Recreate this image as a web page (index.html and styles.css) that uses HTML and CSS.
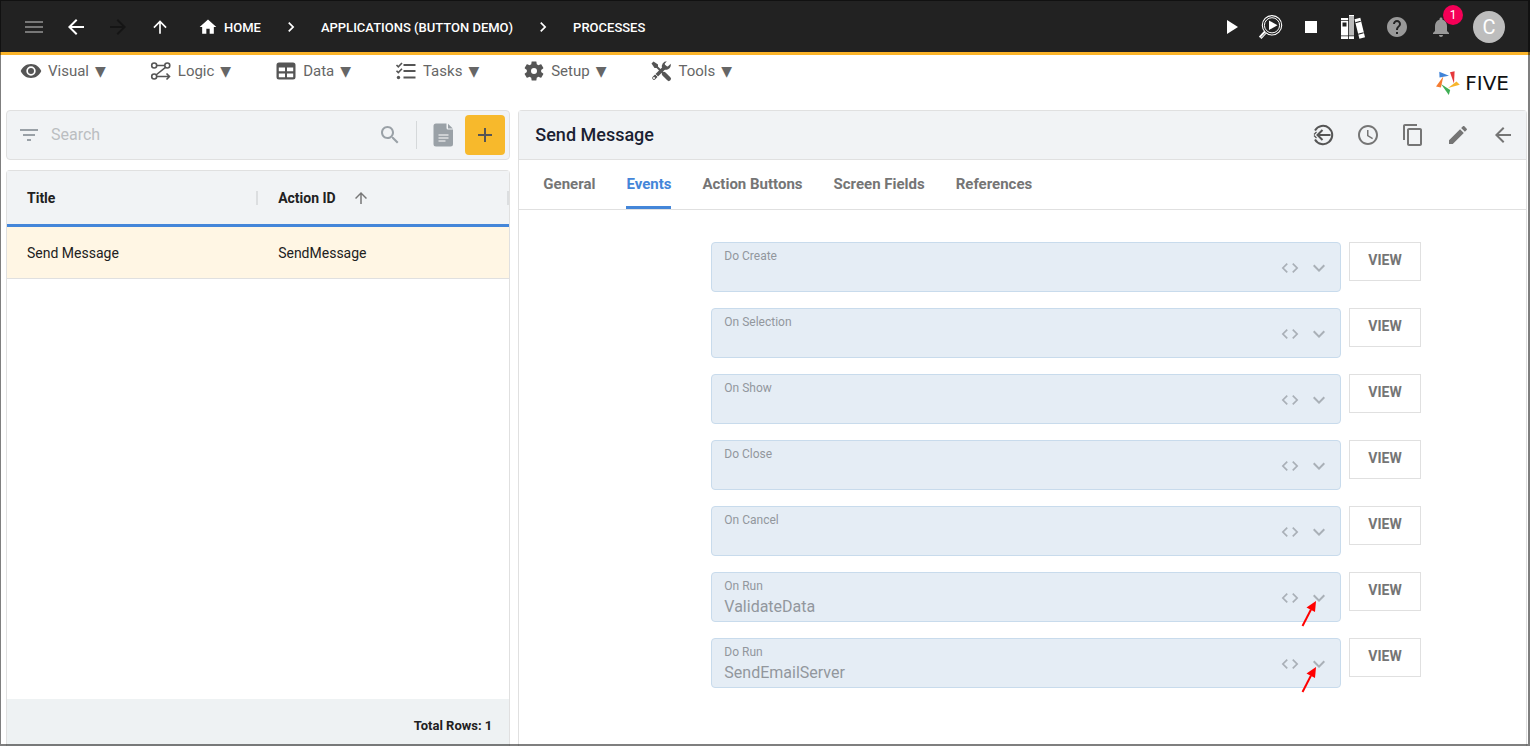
FILE: index.html
```
<!DOCTYPE html>
<html lang="en">

<head>
    <meta charset="UTF-8">
    <meta name="viewport" content="width=device-width, initial-scale=1.0">
    <title>Five - Processes</title>
    <link rel="stylesheet" href="styles.css">
</head>

<body>

    <!-- Shared icons -->
    <svg class="sprite" aria-hidden="true">
        <symbol id="arrow-left" viewBox="0 0 24 24"><path d="M20 11H7.83l5.59-5.59L12 4l-8 8 8 8 1.41-1.41L7.83 13H20v-2z"/></symbol>
        <symbol id="arrow-right" viewBox="0 0 24 24"><path d="M12 4l-1.41 1.41L16.17 11H4v2h12.17l-5.58 5.59L12 20l8-8z"/></symbol>
        <symbol id="arrow-up" viewBox="0 0 24 24"><path d="M4 12l1.41 1.41L11 7.83V20h2V7.83l5.58 5.59L20 12l-8-8-8 8z"/></symbol>
        <symbol id="chevron-right" viewBox="0 0 24 24"><path d="M10 6L8.59 7.41 13.17 12l-4.58 4.59L10 18l6-6z"/></symbol>
        <symbol id="chevron-down" viewBox="0 0 24 24"><path d="M16.59 8.59L12 13.17 7.41 8.59 6 10l6 6 6-6z"/></symbol>
        <symbol id="code" viewBox="0 0 24 24"><path d="M9.4 16.6L4.8 12l4.6-4.6L8 6l-6 6 6 6 1.4-1.4zm5.2 0l4.6-4.6-4.6-4.6L16 6l6 6-6 6-1.4-1.4z"/></symbol>
        <symbol id="pointer" viewBox="0 0 16 28"><path d="M1.500 26L10 9.500" fill="none" stroke="#f00" stroke-width="2"/><path d="M15 1L5.500 7.500l8.500 4.500z" fill="#f00"/></symbol>
    </svg>

    <header class="topbar">
        <div class="nav-buttons">
            <button class="icon-btn dim" aria-label="Menu"><svg class="icon" viewBox="0 0 24 24"><path d="M3 18h18v-2H3v2zm0-5h18v-2H3v2zm0-7v2h18V6H3z"/></svg></button>
            <button class="icon-btn" aria-label="Back"><svg class="icon"><use href="#arrow-left"/></svg></button>
            <button class="icon-btn off" aria-label="Forward"><svg class="icon"><use href="#arrow-right"/></svg></button>
            <button class="icon-btn" aria-label="Up"><svg class="icon icon-md"><use href="#arrow-up"/></svg></button>
        </div>
        <nav class="breadcrumb">
            <a href="#"><svg class="icon icon-md" viewBox="0 0 24 24"><path d="M10 20v-6h4v6h5v-8h3L12 3 2 12h3v8z"/></svg>HOME</a>
            <svg class="icon icon-md"><use href="#chevron-right"/></svg>
            <a href="#">APPLICATIONS (BUTTON DEMO)</a>
            <svg class="icon icon-md"><use href="#chevron-right"/></svg>
            <a href="#">PROCESSES</a>
        </nav>
        <div class="run-tools">
            <button class="icon-btn" aria-label="Run"><svg class="icon" viewBox="0 0 24 24"><path d="M8 5v14l11-7z"/></svg></button>
            <button class="icon-btn" aria-label="Inspect">
                <svg class="icon" viewBox="0 0 24 24">
                    <g fill="none" stroke="#fff">
                        <circle cx="13" cy="10.300" r="9.700" stroke-width="1.100"/>
                        <circle cx="13" cy="10.300" r="7.600" stroke-width="1"/>
                        <path d="M6.500 17L1.200 22.800" stroke-width="3.400"/>
                    </g>
                    <path d="M6.800 17.500L2 22.500" stroke="#222" stroke-width=".7"/>
                    <path d="M10 5.500v9.500l8.500-4.700z"/>
                </svg>
            </button>
            <button class="icon-btn" aria-label="Stop"><svg class="icon" viewBox="0 0 24 24"><path d="M6 6h12v12H6z"/></svg></button>
        </div>
        <div class="user-tools">
            <button class="icon-btn" aria-label="Library">
                <svg class="icon" viewBox="0 0 24 24">
                    <path d="M0 3h7.500v21H0zM8 0h5v24H8zM13.500 4.200l5.800-1.500L24 22.200l-5.600 1.600z"/>
                    <path d="M8 1h5v20H8z" fill="#bbb"/>
                    <path d="M1.500 7.500h4v4h-4zM0 5h7.500v.8H0zM0 20.500h13v.8H0zM7.300 3h.7v21h-.7zM14.200 7.200l5.400-1.500.3 1-5.400 1.500zM17 18.800l5.500-1.500.3 1-5.500 1.500z" fill="#222"/>
                    <path d="M13.200 8v16h3.800z" fill="#222"/>
                </svg>
            </button>
            <button class="icon-btn soft" aria-label="Help"><svg class="icon" viewBox="0 0 24 24"><path d="M12 2C6.480 2 2 6.480 2 12s4.480 10 10 10 10-4.480 10-10S17.520 2 12 2zm1 17h-2v-2h2v2zm2.070-7.750l-.9.920C13.450 12.900 13 13.500 13 15h-2v-.5c0-1.100.450-2.100 1.170-2.830l1.240-1.260c.370-.360.590-.860.590-1.410 0-1.100-.9-2-2-2s-2 .9-2 2H8c0-2.210 1.790-4 4-4s4 1.790 4 4c0 .880-.360 1.680-.930 2.250z"/></svg></button>
            <button class="icon-btn soft" aria-label="Notifications">
                <svg class="icon" viewBox="0 0 24 24"><path d="M12 22c1.100 0 2-.9 2-2h-4c0 1.100.890 2 2 2zm6-6v-5c0-3.070-1.640-5.640-4.500-6.320V4c0-.830-.670-1.500-1.500-1.500s-1.500.670-1.500 1.500v.680C7.630 5.360 6 7.920 6 11v5l-2 2v1h16v-1l-2-2z"/></svg>
                <span class="badge">1</span>
            </button>
        </div>
        <button class="avatar">C</button>
    </header>

    <div class="menubar">
        <nav class="menu">
            <button class="menu-item">
                <svg class="menu-icon" viewBox="0 0 22 22"><path fill-rule="evenodd" d="M11 4C6.200 4 2.500 6.800.7 11c1.800 4.200 5.500 7 10.300 7s8.500-2.800 10.300-7C19.500 6.800 15.800 4 11 4zm0 2.300a4.700 4.700 0 1 1 0 9.400 4.700 4.700 0 0 1 0-9.400z"/><circle cx="11" cy="11" r="3"/></svg>
                Visual <span class="caret">▼</span>
            </button>
            <button class="menu-item">
                <svg class="menu-icon" viewBox="0 0 22 22"><g fill="none" stroke="#555" stroke-width="1.600"><circle cx="4.200" cy="5.500" r="2.500"/><circle cx="17.300" cy="5.500" r="2.500"/><circle cx="4.200" cy="16.500" r="2.500"/><path d="M7 5.500h8M15.500 7.300L6 15M7 16.500h12M16.500 13.500l3 3-3 3"/></g></svg>
                Logic <span class="caret">▼</span>
            </button>
            <button class="menu-item">
                <svg class="menu-icon" viewBox="0 0 22 22"><path fill-rule="evenodd" d="M4 2.500h14a2.500 2.500 0 0 1 2.500 2.500v12a2.500 2.500 0 0 1-2.500 2.500H4A2.500 2.500 0 0 1 1.500 17V5A2.500 2.500 0 0 1 4 2.500zM3.800 7.500v3.700H10V7.500zm8.200 0v3.700h6.200V7.500zm-8.200 6v3.700H10v-3.700zm8.200 0v3.700h6.200v-3.700z"/></svg>
                Data <span class="caret">▼</span>
            </button>
            <button class="menu-item">
                <svg class="menu-icon" viewBox="0 0 22 22"><g fill="none" stroke="#555"><path d="M8.500 5h12M8.500 11h12M8.500 17.500h12" stroke-width="2"/><path d="M1.500 5L3.300 6.800 7 3M1.500 10.800l1.800 1.800L7 8.800" stroke-width="1.600"/></g><circle cx="3.500" cy="17.500" r="1.700"/></svg>
                Tasks <span class="caret">▼</span>
            </button>
            <button class="menu-item">
                <svg class="menu-icon" viewBox="1 1 22 22"><path d="M19.140 12.940c.040-.3.060-.610.060-.940 0-.320-.020-.640-.070-.940l2.030-1.580c.180-.140.230-.410.120-.610l-1.920-3.320c-.120-.220-.370-.290-.590-.220l-2.390.960c-.5-.380-1.030-.7-1.620-.940l-.360-2.540c-.040-.240-.240-.410-.480-.410h-3.840c-.240 0-.430.170-.470.410l-.360 2.540c-.590.240-1.130.570-1.620.940l-2.390-.960c-.220-.080-.470 0-.590.220L2.740 8.870c-.120.210-.080.470.120.610l2.030 1.580c-.050.3-.090.630-.090.940s.020.640.070.940l-2.030 1.580c-.180.140-.230.410-.120.610l1.920 3.320c.120.220.370.290.590.220l2.390-.960c.5.380 1.030.7 1.620.940l.360 2.540c.050.240.240.410.480.410h3.840c.240 0 .440-.170.470-.410l.360-2.540c.590-.240 1.130-.560 1.620-.940l2.390.960c.220.080.470 0 .590-.220l1.920-3.320c.120-.220.070-.470-.120-.610l-2.010-1.580zM12 15a3 3 0 1 1 0-6 3 3 0 0 1 0 6z"/></svg>
                Setup <span class="caret">▼</span>
            </button>
            <button class="menu-item">
                <svg class="menu-icon" viewBox="0 0 22 22">
                    <g fill="none" stroke="#555" stroke-linecap="round"><path d="M4 18l11-11" stroke-width="3.600"/><path d="M14 14l4.800 4.800" stroke-width="4.400"/><path d="M6 6l7 7" stroke-width="2"/></g>
                    <path d="M1.500 3.500l2-2L8 4.500v2.300L6.800 8H4.500z"/>
                    <path d="M16.800 1.300a5 5 0 0 0-4.600 6.900 5 5 0 0 0 8.500-4.400l-2.900 2.700-2.500-.5-.6-2.300z"/>
                    <path d="M5.200 14l3 3" stroke="#fff" stroke-width="1"/><circle cx="4" cy="18" r="1" fill="#fff"/>
                </svg>
                Tools <span class="caret">▼</span>
            </button>
        </nav>
        <a href="#" class="logo">
            <svg class="logo-mark" viewBox="0 0 24 24">
                <path d="M3.300.8l9.700 4-9.500 1.600z" fill="#3f83d8"/>
                <path d="M14 1.200l4.600-.9L18 12.500z" fill="#e5383b"/>
                <path d="M23.800 13.800L20.500 10.500 12 17z" fill="#f7b52c"/>
                <path d="M5 13l9.200 6-1.400 5z" fill="#3fae55"/>
                <path d="M7.300 5.500L0 15.500l4.900 1z" fill="#f47b30"/>
            </svg>
            FIVE
        </a>
    </div>

    <main class="content">
        <section class="list-column">
            <div class="searchbar">
                <svg class="icon" viewBox="0 0 24 24"><path d="M10 18h4v-2h-4v2zM3 6v2h18V6H3zm3 7h12v-2H6v2z"/></svg>
                <input type="search" placeholder="Search" aria-label="Search">
                <button class="icon-btn" aria-label="Find"><svg class="icon" viewBox="0 0 24 24"><path d="M15.500 14h-.790l-.280-.270C15.410 12.590 16 11.110 16 9.500 16 5.910 13.090 3 9.500 3S3 5.910 3 9.500 5.910 16 9.500 16c1.610 0 3.090-.590 4.230-1.570l.270.280v.790l5 4.990L20.490 19l-4.990-5zm-6 0C7.010 14 5 11.990 5 9.500S7.010 5 9.500 5 14 7.010 14 9.500 11.990 14 9.500 14z"/></svg></button>
                <button class="icon-btn report-btn" aria-label="Report"><svg class="icon" viewBox="0 0 24 24"><path d="M5 .5h10.500V5a1.500 1.500 0 0 0 1.500 1.500h5V21a2.500 2.500 0 0 1-2.500 2.500H5A2.500 2.500 0 0 1 2.500 21V3A2.500 2.500 0 0 1 5 .5z"/><path d="M17 .8L21.800 5.500H17z"/><path d="M7.500 12h10M7.500 15h10M7.500 18h7" stroke="#fff" stroke-width="1.200"/></svg></button>
                <button class="add-btn" aria-label="Add"><svg class="icon" viewBox="0 0 24 24"><path d="M19 13h-6v6h-2v-6H5v-2h6V5h2v6h6v2z"/></svg></button>
            </div>

            <div class="table-card">
                <table>
                    <thead>
                        <tr>
                            <th><div class="th-inner">Title</div></th>
                            <th><div class="th-inner">Action ID <svg class="icon icon-sm"><use href="#arrow-up"/></svg></div></th>
                        </tr>
                    </thead>
                    <tbody>
                        <tr>
                            <td>Send Message</td>
                            <td>SendMessage</td>
                        </tr>
                    </tbody>
                </table>
                <div class="table-footer">Total Rows: 1</div>
            </div>
        </section>

        <section class="detail">
            <div class="detail-header">
                <h2>Send Message</h2>
                <button class="icon-btn dark" aria-label="Revert"><svg class="icon" viewBox="0 0 24 24"><g fill="none" stroke="#555" stroke-width="2"><path d="M4 7.500a9.200 9.200 0 1 1 0 9"/><path d="M19.500 12H6.500M11.500 7l-5 5 5 5"/><path d="M5.500 9L3 11.500M5.500 15L3 12.500" stroke-width="1.200"/></g></svg></button>
                <button class="icon-btn" aria-label="History"><svg class="icon" viewBox="0 0 24 24"><path d="M11.990 2C6.470 2 2 6.480 2 12s4.470 10 9.990 10C17.520 22 22 17.520 22 12S17.520 2 11.990 2zM12 20c-4.420 0-8-3.580-8-8s3.580-8 8-8 8 3.580 8 8-3.580 8-8 8zm.5-13H11v6l5.250 3.150.750-1.230-4.500-2.670z"/></svg></button>
                <button class="icon-btn" aria-label="Copy"><svg class="icon" viewBox="0 0 24 24"><path d="M16 1H4c-1.100 0-2 .9-2 2v14h2V3h12V1zm3 4H8c-1.100 0-2 .9-2 2v14c0 1.100.9 2 2 2h11c1.100 0 2-.9 2-2V7c0-1.100-.9-2-2-2zm0 16H8V7h11v14z"/></svg></button>
                <button class="icon-btn" aria-label="Edit"><svg class="icon" viewBox="0 0 24 24"><path d="M3 17.250V21h3.750L17.810 9.940l-3.750-3.750L3 17.250zM20.710 7.040c.390-.390.390-1.020 0-1.410l-2.340-2.340c-.390-.390-1.020-.390-1.410 0l-1.830 1.830 3.750 3.750 1.830-1.830z"/></svg></button>
                <button class="icon-btn" aria-label="Close"><svg class="icon"><use href="#arrow-left"/></svg></button>
            </div>

            <nav class="tabs">
                <button class="tab">General</button>
                <button class="tab active">Events</button>
                <button class="tab">Action Buttons</button>
                <button class="tab">Screen Fields</button>
                <button class="tab">References</button>
            </nav>

            <form class="events">
                <div class="event-row">
                    <div class="field">
                        <div class="field-text">
                            <label for="do-create">Do Create</label>
                            <select id="do-create" disabled><option></option></select>
                        </div>
                        <svg class="icon icon-md"><use href="#code"/></svg>
                        <svg class="icon"><use href="#chevron-down"/></svg>
                    </div>
                    <button type="button" class="view-btn">VIEW</button>
                </div>
                <div class="event-row">
                    <div class="field">
                        <div class="field-text">
                            <label for="on-selection">On Selection</label>
                            <select id="on-selection" disabled><option></option></select>
                        </div>
                        <svg class="icon icon-md"><use href="#code"/></svg>
                        <svg class="icon"><use href="#chevron-down"/></svg>
                    </div>
                    <button type="button" class="view-btn">VIEW</button>
                </div>
                <div class="event-row">
                    <div class="field">
                        <div class="field-text">
                            <label for="on-show">On Show</label>
                            <select id="on-show" disabled><option></option></select>
                        </div>
                        <svg class="icon icon-md"><use href="#code"/></svg>
                        <svg class="icon"><use href="#chevron-down"/></svg>
                    </div>
                    <button type="button" class="view-btn">VIEW</button>
                </div>
                <div class="event-row">
                    <div class="field">
                        <div class="field-text">
                            <label for="do-close">Do Close</label>
                            <select id="do-close" disabled><option></option></select>
                        </div>
                        <svg class="icon icon-md"><use href="#code"/></svg>
                        <svg class="icon"><use href="#chevron-down"/></svg>
                    </div>
                    <button type="button" class="view-btn">VIEW</button>
                </div>
                <div class="event-row">
                    <div class="field">
                        <div class="field-text">
                            <label for="on-cancel">On Cancel</label>
                            <select id="on-cancel" disabled><option></option></select>
                        </div>
                        <svg class="icon icon-md"><use href="#code"/></svg>
                        <svg class="icon"><use href="#chevron-down"/></svg>
                    </div>
                    <button type="button" class="view-btn">VIEW</button>
                </div>
                <div class="event-row">
                    <div class="field">
                        <div class="field-text">
                            <label for="on-run">On Run</label>
                            <select id="on-run" disabled><option>ValidateData</option></select>
                        </div>
                        <svg class="icon icon-md"><use href="#code"/></svg>
                        <svg class="icon"><use href="#chevron-down"/></svg>
                        <svg class="pointer"><use href="#pointer"/></svg>
                    </div>
                    <button type="button" class="view-btn">VIEW</button>
                </div>
                <div class="event-row">
                    <div class="field">
                        <div class="field-text">
                            <label for="do-run">Do Run</label>
                            <select id="do-run" disabled><option>SendEmailServer</option></select>
                        </div>
                        <svg class="icon icon-md"><use href="#code"/></svg>
                        <svg class="icon"><use href="#chevron-down"/></svg>
                        <svg class="pointer"><use href="#pointer"/></svg>
                    </div>
                    <button type="button" class="view-btn">VIEW</button>
                </div>
            </form>
        </section>
    </main>

</body>

</html>
```
FILE: styles.css
```
* {
    box-sizing: border-box;
}

body {
    font-family: Roboto, "Liberation Sans", sans-serif;
    font-size: 14px;
    color: #212121;
    background-color: white;
    margin: 0;
    min-height: 100vh;
    display: flex;
    flex-direction: column;
}

/* Window frame */
body::after {
    content: "";
    position: fixed;
    inset: 0;
    border: solid rgba(0, 0, 0, 0.5);
    border-width: 1px 2px 2px 1px;
    pointer-events: none;
}

button,
input,
select {
    font-family: inherit;
    font-size: inherit;
    color: inherit;
    background: none;
    border: none;
    padding: 0;
    margin: 0;
}

button {
    cursor: pointer;
}

a {
    color: inherit;
    text-decoration: none;
}

.sprite {
    display: none;
}

.icon {
    width: 24px;
    height: 24px;
    fill: currentColor;
    flex-shrink: 0;
}

.icon-md {
    width: 20px;
    height: 20px;
}

.icon-sm {
    width: 18px;
    height: 18px;
}

.icon-btn {
    position: relative;
    display: flex;
    align-items: center;
    justify-content: center;
    width: 40px;
    height: 40px;
}

/* Top bar */
.topbar {
    display: flex;
    align-items: center;
    height: 55px;
    padding: 2px 25px 0 13px;
    background-color: #222;
    border-bottom: 3px solid #fbb429;
    color: white;
}

.nav-buttons,
.run-tools,
.user-tools {
    display: flex;
}

.nav-buttons .icon-btn {
    width: 42px;
}

.user-tools .icon-btn {
    width: 44px;
}

.dim {
    color: #777;
}

.off {
    color: #151515;
}

.soft {
    color: #999;
}

.breadcrumb {
    flex: 1;
    display: flex;
    align-items: center;
    gap: 20px;
    margin-left: 17px;
    font-size: 13px;
    font-weight: 500;
}

.breadcrumb a {
    display: flex;
    align-items: center;
    gap: 6px;
}

.badge {
    position: absolute;
    top: -2px;
    right: 0;
    width: 20px;
    height: 20px;
    border-radius: 50%;
    background-color: #f50057;
    color: white;
    font-size: 12px;
    line-height: 20px;
    text-align: center;
}

.avatar {
    width: 32px;
    height: 32px;
    margin-left: 10px;
    border-radius: 50%;
    background-color: #bdbdbd;
    color: white;
    font-size: 20px;
}

/* Menu bar */
.menubar {
    display: flex;
    justify-content: space-between;
    height: 55px;
    padding: 0 21px 0 20px;
}

.menu {
    display: flex;
    align-items: flex-start;
    gap: 44px;
}

.menu-item {
    display: flex;
    align-items: center;
    gap: 6px;
    height: 32px;
    color: #666;
    font-size: 15px;
}

.menu-icon {
    width: 22px;
    height: 22px;
    fill: #555;
}

.caret {
    font-family: "DejaVu Sans", sans-serif;
    font-size: 14px;
    line-height: 14px;
}

.logo {
    display: flex;
    align-items: center;
    gap: 5px;
    color: #111;
    font-family: "DejaVu Sans", sans-serif;
    font-size: 20px;
}

.logo-mark {
    width: 24px;
    height: 24px;
}

/* Two columns: list and record */
.content {
    flex: 1;
    display: grid;
    grid-template-columns: 1fr 2fr;
    gap: 8px;
    padding: 0 3px 0 6px;
}

.list-column {
    display: flex;
    flex-direction: column;
    gap: 10px;
}

.searchbar {
    display: flex;
    align-items: center;
    height: 50px;
    padding: 0 4px 0 10px;
    background-color: #f1f3f5;
    border: 1px solid #e0e0e0;
    border-radius: 4px;
    color: #9aa1a7;
}

.searchbar input {
    flex: 1;
    min-width: 0;
    margin-left: 10px;
    padding-bottom: 2px;
    font-size: 16px;
    outline: none;
}

.searchbar input::placeholder {
    color: #bbbec1;
}

.report-btn {
    width: 49px;
    height: 28px;
    margin-left: 6px;
    padding-left: 3px;
    border-left: 1px solid #d5d8da;
}

.add-btn {
    display: flex;
    align-items: center;
    justify-content: center;
    width: 40px;
    height: 40px;
    border-radius: 4px;
    background-color: #f7b92c;
    color: #555;
}

.table-card {
    flex: 1;
    display: flex;
    flex-direction: column;
    justify-content: space-between;
    border: 1px solid #e0e0e0;
    border-bottom: none;
    border-radius: 4px 4px 0 0;
}

table {
    width: 100%;
    table-layout: fixed;
    border-collapse: separate;
    border-spacing: 0;
}

th {
    height: 56px;
    padding: 0;
    background-color: #f1f3f5;
    border-bottom: 3px solid #4486d9;
    font-weight: 700;
    text-align: left;
}

.th-inner {
    display: flex;
    align-items: center;
    gap: 16px;
    height: 14px;
    padding-left: 20px;
    border-right: 2px solid #dcdee0;
}

.th-inner .icon {
    color: #777;
}

td {
    height: 52px;
    padding: 0 20px;
    background-color: #fff6e4;
    border-bottom: 1px solid #e0e0e0;
}

.table-footer {
    height: 47px;
    padding: 18px 17px 0;
    background-color: #eef2f3;
    font-size: 13px;
    font-weight: 700;
    line-height: 18px;
    text-align: right;
}

/* Record panel */
.detail {
    border: 1px solid #e0e0e0;
    border-bottom: none;
    border-radius: 4px 4px 0 0;
}

.detail-header {
    display: flex;
    align-items: center;
    height: 49px;
    padding: 0 1px 0 16px;
    background-color: #f1f3f5;
    border-bottom: 1px solid #e0e0e0;
    color: #757575;
}

.detail-header h2 {
    flex: 1;
    margin: 0;
    padding-bottom: 2px;
    color: #1b1f33;
    font-size: 18px;
    font-weight: 500;
}

.detail-header .icon-btn {
    width: 45px;
}

.tabs {
    display: flex;
    gap: 31px;
    height: 50px;
    padding: 0 24px;
    border-bottom: 1px solid #e0e0e0;
}

.tab {
    border-bottom: 3px solid transparent;
    padding-top: 2px;
    color: #757575;
    font-size: 15px;
    font-weight: 700;
}

.tab.active {
    color: #4486d9;
    border-bottom-color: #4486d9;
}

.events {
    display: flex;
    flex-direction: column;
    gap: 16px;
    padding: 32px 105px 32px 192px;
}

.event-row {
    display: flex;
    align-items: flex-start;
    gap: 8px;
}

.field {
    position: relative;
    flex: 1;
    display: flex;
    align-items: center;
    gap: 7px;
    height: 50px;
    padding: 2px 9px 0 12px;
    background-color: #e5edf5;
    border: 1px solid #c8dbec;
    border-radius: 4px;
    color: #a9b0b7;
}

.field-text {
    flex: 1;
    display: flex;
    flex-direction: column;
    color: #92979d;
}

.field-text label {
    font-size: 12px;
    line-height: 16px;
}

.field-text select {
    height: 24px;
    appearance: none;
    font-size: 16px;
    opacity: 1;
}

.pointer {
    position: absolute;
    right: 23px;
    bottom: -7px;
    width: 16px;
    height: 28px;
}

.view-btn {
    width: 72px;
    height: 39px;
    padding-bottom: 4px;
    background-color: white;
    border: 1px solid #e0e0e0;
    color: #757575;
    font-weight: 700;
}
```
